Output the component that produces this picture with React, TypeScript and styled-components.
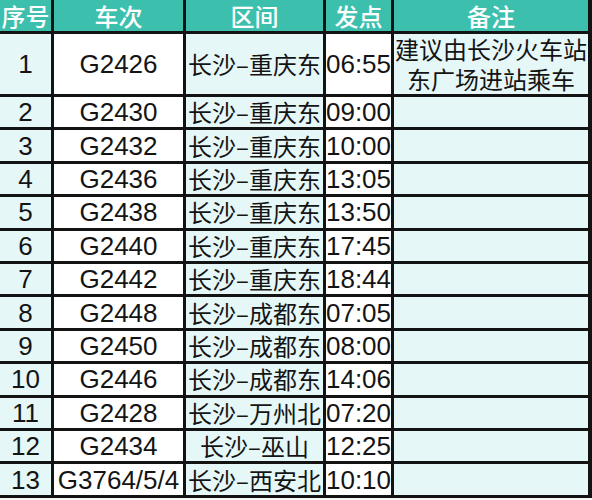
import { createGlobalStyle } from "styled-components";
import styled from "styled-components";

const GlobalStyle = createGlobalStyle`
  html, body {
    margin: 0;
    padding: 0;
    background: #f4f5f5;
  }
  body {
    font-family: "Liberation Sans", "Noto Sans CJK SC", sans-serif;
    color: #141414;
  }
`

type Tone = "tint" | "plain";

interface Train {
  no: number,
  code: string,
  route: string,
  time: string,
  note?: string[]
}

const trains: Train[] = [
  { no: 1, code: "G2426", route: "长沙–重庆东", time: "06:55", note: ["建议由长沙火车站", "东广场进站乘车"] },
  { no: 2, code: "G2430", route: "长沙–重庆东", time: "09:00" },
  { no: 3, code: "G2432", route: "长沙–重庆东", time: "10:00" },
  { no: 4, code: "G2436", route: "长沙–重庆东", time: "13:05" },
  { no: 5, code: "G2438", route: "长沙–重庆东", time: "13:50" },
  { no: 6, code: "G2440", route: "长沙–重庆东", time: "17:45" },
  { no: 7, code: "G2442", route: "长沙–重庆东", time: "18:44" },
  { no: 8, code: "G2448", route: "长沙–成都东", time: "07:05" },
  { no: 9, code: "G2450", route: "长沙–成都东", time: "08:00" },
  { no: 10, code: "G2446", route: "长沙–成都东", time: "14:06" },
  { no: 11, code: "G2428", route: "长沙–万州北", time: "07:20" },
  { no: 12, code: "G2434", route: "长沙–巫山", time: "12:25" },
  { no: 13, code: "G3764/5/4", route: "长沙–西安北", time: "10:10" },
];

const headers = ["序号", "车次", "区间", "发点", "备注"];
const tones: Tone[] = ["tint", "plain", "tint", "plain", "tint"];

const Sheet = styled.div`
  width: 591px;
  display: grid;
  grid-template-columns: 51px 129px 137px 65px 194px;
  grid-template-rows: 31px 60px;
  grid-auto-rows: 30.42px;
  gap: 3px;
  padding: 0 3px 3px 0;
  background: #131313;
`

const HeadCell = styled.div`
  background: #3dbfae;
  color: #ffffff;
  font-family: "Noto Sans CJK SC", sans-serif;
  font-size: 24px;
  font-weight: 500;
  line-height: 28px;
  display: flex;
  align-items: center;
  justify-content: center;
  white-space: nowrap;
`

const Cell = styled.div<{ $tone: Tone, $cjk?: boolean }>`
  background: ${p => p.$tone === "tint" ? "#e6f7f8" : "#ffffff"};
  display: flex;
  flex-direction: column;
  align-items: center;
  justify-content: center;
  white-space: nowrap;
  font-size: ${p => p.$cjk ? "24px" : "26px"};
  font-family: ${p => p.$cjk ? `"Noto Sans CJK SC", sans-serif` : `"Liberation Sans", "Noto Sans CJK SC", sans-serif`};
  line-height: 28px;
`

const NoteLine = styled.span`
  display: block;
  line-height: 30px;
`

export default function App() {
  return <>
    <GlobalStyle />
    <Sheet>
      {headers.map(h => <HeadCell key={h}>{h}</HeadCell>)}
      {trains.map(t => [
        <Cell key={t.no + "n"} $tone={tones[0]}>{t.no}</Cell>,
        <Cell key={t.no + "c"} $tone={tones[1]}>{t.code}</Cell>,
        <Cell key={t.no + "r"} $tone={tones[2]} $cjk>{t.route}</Cell>,
        <Cell key={t.no + "t"} $tone={tones[3]}>{t.time}</Cell>,
        <Cell key={t.no + "x"} $tone={tones[4]} $cjk>
          {t.note?.map(line => <NoteLine key={line}>{line}</NoteLine>)}
        </Cell>,
      ])}
    </Sheet>
  </>
}
